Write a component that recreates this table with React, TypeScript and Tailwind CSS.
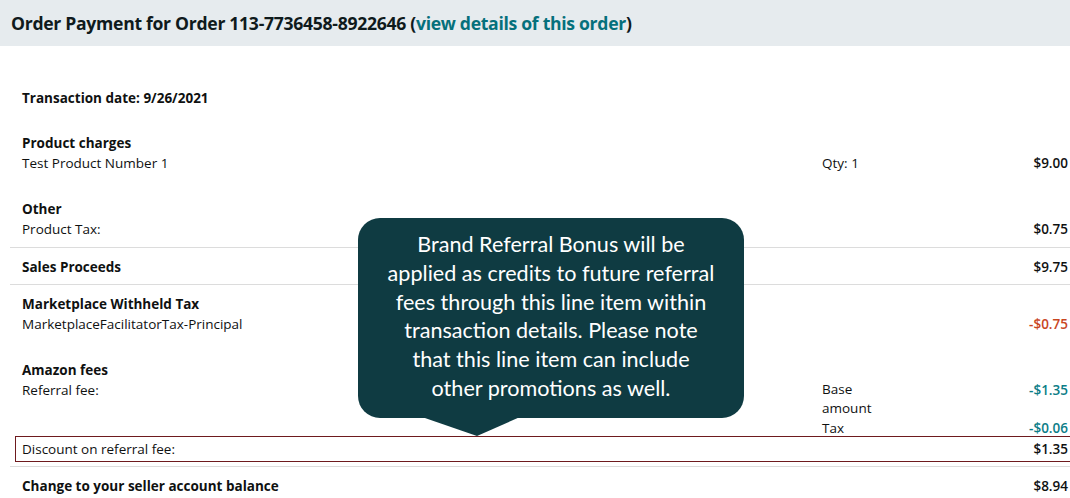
import React from "react";

const font = { fontFamily: '"Open Sans", "Noto Sans", Arial, sans-serif' };

function Row({
  label,
  mid,
  amount,
  amountClass = "",
  bold = false,
}: {
  label?: React.ReactNode;
  mid?: React.ReactNode;
  amount?: React.ReactNode;
  amountClass?: string;
  bold?: boolean;
}) {
  return (
    <div className="grid grid-cols-[800px_70px_1fr] leading-[20px]">
      <div className={bold ? "font-bold" : ""}>{label}</div>
      <div>{mid}</div>
      <div className={"text-right font-semibold " + amountClass}>{amount}</div>
    </div>
  );
}

export default function App() {
  return (
    <div
      className="relative w-[1070px] h-[498px] overflow-hidden bg-white text-[13.5px] text-[#0f1111]"
      style={font}
    >
      <div className="h-[46px] bg-[#e6ebee] flex items-center pl-[11px]">
        <h1 className="text-[17.6px] font-bold tracking-[-0.3px] text-[#0f1a1c]">
          Order Payment for Order 113-7736458-8922646 (
          <span className="text-[#05707c]">view details of this order</span>)
        </h1>
      </div>

      <div className="pl-[10px]">
        <div className="pl-[12px] pr-[2px]">
          <div className="pt-[42px]">
            <Row label="Transaction date: 9/26/2021" bold />
          </div>
          <div className="pt-[25px]">
            <Row label="Product charges" bold />
            <Row label="Test Product Number 1" mid="Qty: 1" amount="$9.00" />
          </div>
          <div className="pt-[26px] pb-[8px]">
            <Row label="Other" bold />
            <Row label="Product Tax:" amount="$0.75" />
          </div>
        </div>
        <div className="border-t border-[#dcdcdc] pl-[12px] pr-[2px] pt-[9px] pb-[7px]">
          <Row label="Sales Proceeds" bold amount="$9.75" />
        </div>
        <div className="border-t border-[#dcdcdc] pl-[12px] pr-[2px] pt-[9px]">
          <Row label="Marketplace Withheld Tax" bold />
          <Row
            label="MarketplaceFacilitatorTax-Principal"
            amount="-$0.75"
            amountClass="text-[#c9461f]"
          />
          <div className="pt-[26px]">
            <Row label="Amazon fees" bold />
            <div className="grid grid-cols-[800px_70px_1fr]">
              <div className="leading-[20px]">Referral fee:</div>
              <div className="leading-[19px]">
                Base
                <br />
                amount
              </div>
              <div className="text-right font-semibold leading-[20px] text-[#0b7d87]">
                -$1.35
              </div>
            </div>
            <div className="grid grid-cols-[800px_70px_1fr] leading-[16px] pt-[2px]">
              <div></div>
              <div>Tax</div>
              <div className="text-right font-semibold text-[#0b7d87]">-$0.06</div>
            </div>
          </div>
        </div>
        <div className="ml-[5px] -mr-[4px] border border-[#6e1a1e] h-[26px] flex items-center pl-[6px] pr-[5px]">
          <div className="flex-1 leading-[20px]">Discount on referral fee:</div>
          <div className="font-semibold leading-[20px]">$1.35</div>
        </div>
        <div className="mt-[4px] border-t border-[#dcdcdc] pl-[12px] pr-[2px] pt-[9px]">
          <Row label="Change to your seller account balance" bold amount="$8.94" />
        </div>
      </div>

      {/* Callout */}
      <div className="absolute left-[358px] top-[218px] w-[386px]">
        <div
          className="h-[200px] rounded-[22px] bg-[#0f3b42] text-white text-center text-[21.6px] leading-[28.8px] pt-[12px]"
          style={{ fontFamily: 'Lato, "Open Sans", sans-serif' }}
        >
          Brand Referral Bonus will be
          <br />
          applied as credits to future referral
          <br />
          fees through this line item within
          <br />
          transaction details. Please note
          <br />
          that this line item can include
          <br />
          other promotions as well.
        </div>
        <svg className="absolute left-[64px] top-[199px]" width="98" height="20" viewBox="0 0 98 20">
          <polygon points="0,0 98,0 55,19" fill="#0f3b42" />
        </svg>
      </div>
    </div>
  );
}
